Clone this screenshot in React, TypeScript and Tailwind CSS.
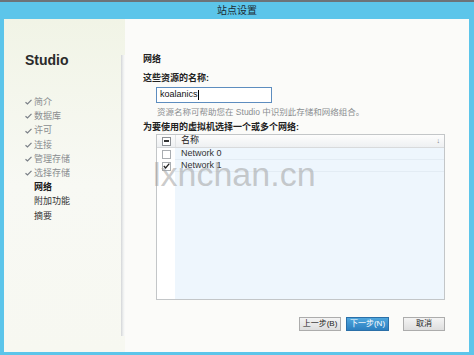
import React from "react";

const Check = () => (
  <svg width="7" height="6" viewBox="0 0 7 6" className="shrink-0">
    <path d="M0.5 3.2 L2.5 5 L6.5 0.8" stroke="#7a7f86" strokeWidth="1.2" fill="none" />
  </svg>
);

const navDone = ["简介", "数据库", "许可", "连接", "管理存储", "选择存储"];

export default function App() {
  return (
    <div
      className="w-[474px] h-[355px] bg-[#5cc5ea] flex flex-col overflow-hidden"
      style={{ fontFamily: '"Liberation Sans", "Noto Sans CJK SC", sans-serif' }}
    >
      <div className="h-[2px] bg-[#6d7378]" />
      <div className="h-[17px] flex items-center justify-center text-[10px] text-[#1d2b33]">
        站点设置
      </div>
      <div className="flex-1 mx-[4px] mr-[5px] mb-[3px] flex bg-gradient-to-b from-[#f1f4e6] via-[#f8f9f4] to-[#f7f8f1] relative">
        {/* left nav */}
        <div className="w-[117px] flex flex-col pl-[21px] pt-[32px]">
          <div className="text-[14px] font-bold text-[#2a2a2a] leading-[18px]">Studio</div>
          <div className="mt-[26px] flex flex-col text-[9px] leading-[14.2px]">
            {navDone.map((n) => (
              <div key={n} className="flex items-center gap-[2px] text-[#8a8d90]">
                <Check />
                <span>{n}</span>
              </div>
            ))}
            <div className="pl-[9px] font-bold text-[#1a1a1a]">网络</div>
            <div className="pl-[9px] text-[#333]">附加功能</div>
            <div className="pl-[9px] text-[#333]">摘要</div>
          </div>
        </div>
        {/* separator */}
        <div className="w-[4px] mt-[36px] mb-[16px] bg-gradient-to-r from-[#d3d5d8] via-[#eceeee] to-[#fbfbfa]" />
        {/* right panel */}
        <div className="flex-1 flex flex-col pl-[18px] pr-[24px] pt-[34px] bg-[#fbfbf9] relative">
          <div className="text-[9px] font-bold text-[#222] leading-[12px]">网络</div>
          <div className="mt-[7px] text-[9px] font-bold text-[#222] leading-[12px]">这些资源的名称:</div>
          <div className="ml-[13px] mt-[3px] w-[116px] h-[16px] border border-[#5d8dbf] bg-white flex items-center px-[3px] text-[9px] text-[#111]">
            koalanics<span className="w-px h-[10px] bg-black" />
          </div>
          <div className="ml-[14px] mt-[3px] text-[8.5px] text-[#8a8d90] leading-[12px] whitespace-nowrap">
            资源名称可帮助您在 Studio 中识别此存储和网络组合。
          </div>
          <div className="mt-[3px] text-[9px] font-bold text-[#222] leading-[12px]">为要使用的虚拟机选择一个或多个网络:</div>
          <div className="ml-[13px] mt-[1px] w-[289px] h-[166px] border border-[#c3c6c8] bg-white flex flex-col">
            <div className="h-[13px] flex items-center border-b border-[#d8dadc] bg-gradient-to-b from-[#fdfdfd] to-[#eef0f2] text-[9px] text-[#222]">
              <div className="w-[18px] flex justify-center">
                <div className="w-[9px] h-[9px] border border-[#8c9095] bg-white flex items-center justify-center">
                  <div className="w-[5px] h-[1.5px] bg-[#333]" />
                </div>
              </div>
              <div className="flex-1 pl-[5px] border-l border-[#e2e4e6] h-full flex items-center">名称</div>
              <div className="pr-[4px] text-[7px] text-[#777]">↓</div>
            </div>
            <div className="flex-1 flex">
              <div className="w-[18px] bg-white flex flex-col">
                <div className="h-[12px] flex items-center justify-center">
                  <div className="w-[9px] h-[9px] border border-[#a9adb1] bg-white" />
                </div>
                <div className="h-[12px] flex items-center justify-center">
                  <div className="w-[9px] h-[9px] border border-[#a9adb1] bg-white flex items-center justify-center">
                    <svg width="7" height="6" viewBox="0 0 7 6">
                      <path d="M0.8 3 L2.6 5 L6.3 0.7" stroke="#222" strokeWidth="1.3" fill="none" />
                    </svg>
                  </div>
                </div>
              </div>
              <div className="flex-1 bg-[#eef6fd] flex flex-col text-[9px] text-[#333]">
                <div className="h-[12px] flex items-center pl-[6px] border-b border-[#e3ecf4]">Network 0</div>
                <div className="h-[12px] flex items-center pl-[6px] border-b border-[#e3ecf4]">Network 1</div>
              </div>
            </div>
          </div>
          <div className="mt-[17px] flex justify-end gap-[5px] text-[8px]">
            <div className="w-[42px] h-[14px] border border-[#acacac] bg-gradient-to-b from-[#f4f4f4] to-[#dedede] flex items-center justify-center text-[#222]">上一步(B)</div>
            <div className="w-[43px] h-[14px] border border-[#2a6fa8] bg-gradient-to-b from-[#4fa6dd] to-[#2c7fc0] flex items-center justify-center text-white">下一步(N)</div>
            <div className="ml-[9px] w-[42px] h-[14px] border border-[#acacac] bg-gradient-to-b from-[#f4f4f4] to-[#dedede] flex items-center justify-center text-[#222]">取消</div>
          </div>
          <div
            className="absolute left-[28px] top-[138px] text-[34px] text-[#a0a0a0]/55 leading-none pointer-events-none"
            style={{ fontFamily: '"Liberation Sans", sans-serif' }}
          >
            lxnchan.cn
          </div>
        </div>
      </div>
    </div>
  );
}
